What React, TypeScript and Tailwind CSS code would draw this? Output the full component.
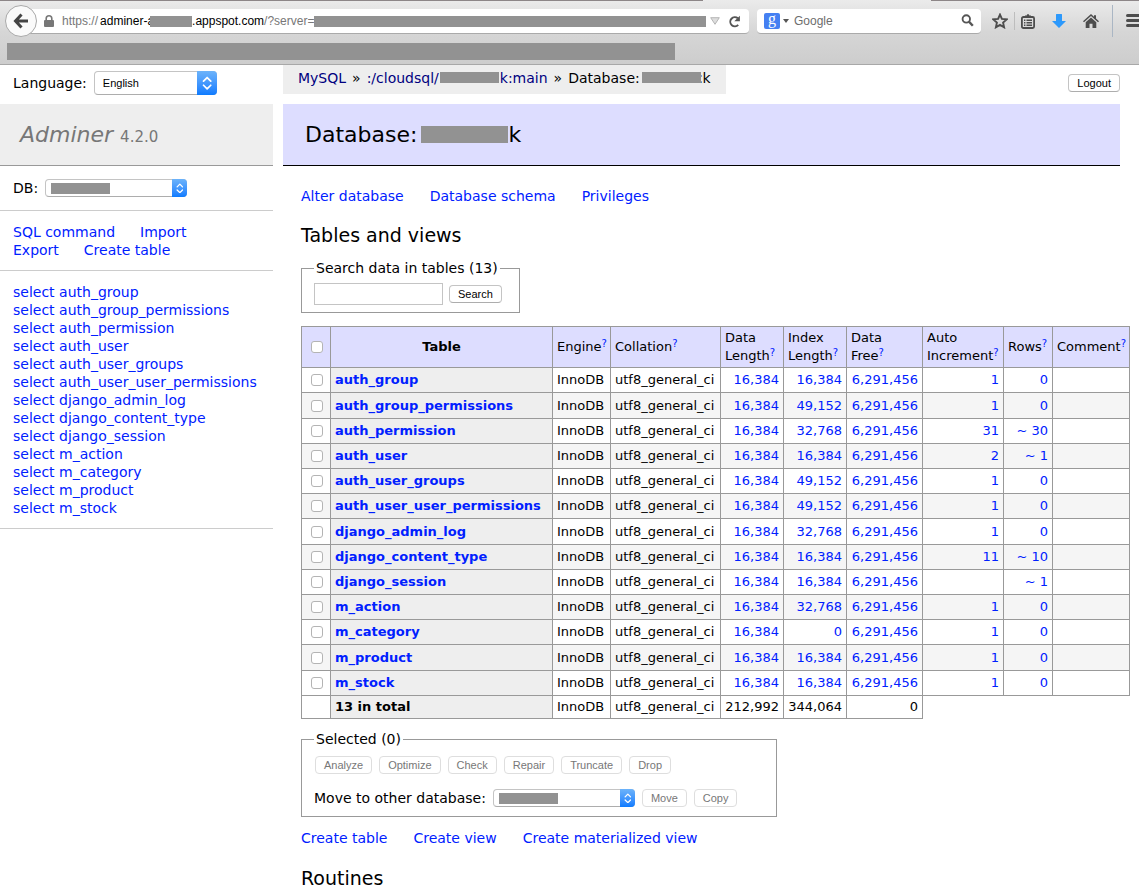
import React, { useState } from 'react';

interface TableRow {
  name: string;
  data: string;
  index: string;
  increment: string;
  rows: string;
}

const TABLES: TableRow[] = [
  { name: 'auth_group', data: '16,384', index: '16,384', increment: '1', rows: '0' },
  { name: 'auth_group_permissions', data: '16,384', index: '49,152', increment: '1', rows: '0' },
  { name: 'auth_permission', data: '16,384', index: '32,768', increment: '31', rows: '~ 30' },
  { name: 'auth_user', data: '16,384', index: '16,384', increment: '2', rows: '~ 1' },
  { name: 'auth_user_groups', data: '16,384', index: '49,152', increment: '1', rows: '0' },
  { name: 'auth_user_user_permissions', data: '16,384', index: '49,152', increment: '1', rows: '0' },
  { name: 'django_admin_log', data: '16,384', index: '32,768', increment: '1', rows: '0' },
  { name: 'django_content_type', data: '16,384', index: '16,384', increment: '11', rows: '~ 10' },
  { name: 'django_session', data: '16,384', index: '16,384', increment: '', rows: '~ 1' },
  { name: 'm_action', data: '16,384', index: '32,768', increment: '1', rows: '0' },
  { name: 'm_category', data: '16,384', index: '0', increment: '1', rows: '0' },
  { name: 'm_product', data: '16,384', index: '16,384', increment: '1', rows: '0' },
  { name: 'm_stock', data: '16,384', index: '16,384', increment: '1', rows: '0' },
];

const ACTIONS = ['Analyze', 'Optimize', 'Check', 'Repair', 'Truncate', 'Drop'];

const cell = 'border border-[#999] px-1';

const Link: React.FC<{ children: React.ReactNode; className?: string }> = ({ children, className = 'text-[#0020ff]' }) => (
  <a href="#" className={className}>{children}</a>
);

const Button: React.FC<{ label: string; disabled?: boolean }> = ({ label, disabled }) => (
  <button
    type="button"
    disabled={disabled}
    className="flex h-[18px] items-center rounded border border-[#c4c4c4] border-b-[#adadad] bg-white px-2 font-[Liberation_Sans,sans-serif] text-[11px] text-black disabled:border-[#dedede] disabled:text-[#777]"
  >
    {label}
  </button>
);

const CheckBox: React.FC<{ label: string; checked: boolean; onChange: () => void }> = ({ label, checked, onChange }) => (
  <input
    type="checkbox"
    aria-label={label}
    checked={checked}
    onChange={onChange}
    className="ml-[5px] block size-3 appearance-none rounded-[3px] border border-[#b4b4b4] bg-white checked:bg-[#2f8cff]"
  />
);

// Blue stepper on the right end of a drop-down
const Stepper: React.FC<{ className: string }> = ({ className }) => (
  <span className={`pointer-events-none absolute right-0 top-0 flex h-full items-center justify-center rounded-r bg-gradient-to-b from-[#6cb3fa] to-[#0a7bff] ${className}`}>
    <svg viewBox="0 0 10 14" className="h-3/5" fill="none" stroke="white" strokeWidth="1.7" strokeLinecap="round" strokeLinejoin="round">
      <path d="M1.5 5 5 1.5 8.5 5M1.5 9 5 12.5 8.5 9" />
    </svg>
  </span>
);

const DatabaseSelect: React.FC<{ id: string }> = ({ id }) => (
  <span className="relative flex">
    <select id={id} className="h-[18px] w-[142px] appearance-none rounded border border-[#c4c4c4] border-b-[#adadad] bg-white">
      <option value="" />
    </select>
    <span className="pointer-events-none absolute left-[6px] top-1 h-[11px] w-[59px] bg-[#929292]" />
    <Stepper className="w-[15px]" />
  </span>
);

const Hint = () => (
  <sup className="relative top-[-4px] align-baseline text-[10px] leading-none"><Link>?</Link></sup>
);

const BrowserBar = () => (
  <header className="flex h-[65px] flex-col overflow-hidden border-b border-[#a8a8a8] bg-gradient-to-b from-[#ebebeb] via-[#d6d6d6] to-[#cdcdcd] font-[Liberation_Sans,sans-serif] text-[12px]">
    <div className="flex h-px shrink-0">
      <div className="w-[703px] bg-[#8d8688]" />
      <div className="w-[228px]" />
      <div className="flex-1 bg-[#8d8688]" />
    </div>
    <div className="flex items-center pl-[5px] pt-1">
      <button type="button" aria-label="Back" className="z-10 flex size-8 shrink-0 items-center justify-center rounded-full border border-[#a9a9a9] bg-[#fafafa]">
        <svg viewBox="0 0 16 16" className="size-4" fill="none" stroke="#444" strokeWidth="3">
          <path d="M8.5 1.5 2.5 8l6 6.5M3 8h12" />
        </svg>
      </button>
      <div className="-ml-2 flex h-[25px] flex-1 items-center rounded-r border-b border-[#aaa] bg-white pl-[15px] pr-2 pt-px">
        <svg viewBox="0 0 10 12" className="mr-2 h-3 w-[10px]">
          <path d="M2.2 6V3.6a2.8 2.8 0 0 1 5.6 0V6" fill="none" stroke="#777" strokeWidth="1.6" />
          <rect y="5" width="10" height="7" rx="1" fill="#777" />
        </svg>
        <div role="textbox" aria-label="Address" className="flex flex-1 items-center whitespace-pre text-[#777]">
          <span className="mr-[2px]">https://</span>
          <span className="text-black">adminer-a</span>
          <span className="-ml-1 h-[11px] w-[42px] bg-[#929292]" />
          <span className="text-black">.appspot.com</span>
          <span>/?server=</span>
          <span className="h-[11px] flex-1 bg-[#929292]" />
        </div>
        <svg viewBox="0 0 10 8" className="ml-1 h-2 w-[10px]">
          <path d="M.7.7h8.600L5 7.300z" fill="#ddd" stroke="#b5b5b5" />
        </svg>
        <button type="button" aria-label="Reload" className="ml-2">
          <svg viewBox="0 0 14 14" className="size-[13px]" fill="none" stroke="#555" strokeWidth="2.1">
            <path d="M10.6 3.6A4.9 4.9 0 1 0 11 10.6" />
            <path d="M12.8.7v6.1H6.8z" fill="#555" stroke="none" />
          </svg>
        </button>
      </div>
      <div className="ml-2 flex h-[25px] w-[224px] shrink-0 items-center rounded border-b border-[#aaa] bg-white px-[7px]">
        <span className="flex size-4 items-center justify-center rounded-[2px] bg-[#4580f2] pb-1 font-[Liberation_Serif,serif] text-[16px] leading-none text-white">g</span>
        <svg viewBox="0 0 6 4" className="ml-[3px] h-1 w-[6px]"><path d="M0 0h6L3 4z" fill="#555" /></svg>
        <input aria-label="Search the web" placeholder="Google" className="ml-[5px] min-w-0 flex-1 pt-px outline-none placeholder:text-[#6d6d6d]" />
        <svg viewBox="0 0 14 14" className="size-[13px]" fill="none" stroke="#555" strokeWidth="2">
          <circle cx="5.7" cy="5.3" r="4" />
          <path d="m8.7 8.4 4 4.3" strokeWidth="2.6" />
        </svg>
      </div>
      <div className="ml-[11px] flex w-[147px] shrink-0 items-center text-[#4d4d4d]">
        <button type="button" aria-label="Bookmark this page" className="shrink-0">
          <svg viewBox="0 0 16 16" className="size-4" fill="none" stroke="currentColor" strokeWidth="1.9">
            <path d="m8 1.6 1.9 4.3 4.8.5-3.6 3.2 1 4.7L8 11.9l-4.1 2.4 1-4.7L1.3 6.4l4.8-.5z" />
          </svg>
        </button>
        <span className="ml-[6px] h-[18px] w-px shrink-0 bg-[#bdbdbd]" />
        <button type="button" aria-label="Bookmarks" className="ml-[6px] shrink-0">
          <svg viewBox="0 0 14 15" className="h-[15px] w-[14px]" fill="none" stroke="currentColor" strokeWidth="1.8">
            <rect x=".9" y="3" width="12.2" height="11" rx="1.5" />
            <path d="M3 6.200h1.400M5.500 6.200H11M3 8.700h1.400M5.500 8.700H11M3 11.200h1.400M5.500 11.200H11" strokeWidth="1.4" />
            <path d="M4 3.500V1.600h1.600L6.200.3h1.600l.6 1.300H10v1.900z" fill="currentColor" stroke="none" />
          </svg>
        </button>
        <button type="button" aria-label="Downloads" className="ml-[17px] shrink-0">
          <svg viewBox="0 0 14 14" className="size-[14px]"><path d="M4 .5Q4 0 4.500 0h5q.5 0 .5.5V7h4l-7 7-7-7h4z" fill="#2d99fb" /></svg>
        </button>
        <button type="button" aria-label="Home" className="ml-[17px] shrink-0">
          <svg viewBox="0 0 16 14" className="h-[14px] w-4" fill="currentColor">
            <path d="M8 0 0 7.200l1 1.100 7-6.300 7 6.300 1-1.100-3-2.700V1.200h-2v1.500z" />
            <path d="m8 3.500-5.300 4.800V14h3.800V9.800h3V14h3.800V8.300z" />
          </svg>
        </button>
        <span className="ml-[13px] h-8 w-px shrink-0 bg-[#aab6c4]" />
        <button type="button" aria-label="Open menu" className="ml-[13px] shrink-0">
          <svg viewBox="0 0 18 14" className="h-[14px] w-[18px]" fill="currentColor">
            <rect width="18" height="3" rx="1.5" /><rect y="5" width="18" height="3" rx="1.5" /><rect y="10" width="18" height="3" rx="1.5" />
          </svg>
        </button>
      </div>
    </div>
    <div className="ml-[7px] mt-[6px] h-[17px] w-[668px] bg-[#929292]" />
  </header>
);

const Sidebar = () => (
  <nav className="w-[273px] shrink-0">
    <div className="flex items-center gap-[7px] px-[13px] pb-[9px] pt-[6px]">
      <label htmlFor="lang">Language:</label>
      <span className="relative flex">
        <select id="lang" className="h-6 w-[123px] appearance-none rounded border border-[#c4c4c4] border-b-[#adadad] bg-white pl-2 font-[Liberation_Sans,sans-serif] text-[11px]">
          <option>English</option>
        </select>
        <Stepper className="w-5" />
      </span>
    </div>
    <h1 className="border-b border-[#999] bg-[#eee] py-[17px] pl-5 text-[22px] leading-[27px] text-[#777]">
      <i>Adminer</i> <span className="text-[15px] leading-none">4.2.0</span>
    </h1>
    <div className="flex items-center gap-[7px] border-b border-[#ccc] px-[13px] py-[13px]">
      <label htmlFor="db">DB:</label>
      <DatabaseSelect id="db" />
    </div>
    <div className="border-b border-[#ccc] px-[13px] pb-[11px] pt-3">
      <p className="flex gap-[25px]"><Link>SQL command</Link><Link>Import</Link></p>
      <p className="flex gap-[25px]"><Link>Export</Link><Link>Create table</Link></p>
    </div>
    <ul className="whitespace-nowrap border-b border-[#ccc] px-[13px] pb-[11px] pt-3">
      {TABLES.map(t => (
        <li key={t.name}><Link>select</Link> <Link>{t.name}</Link></li>
      ))}
    </ul>
  </nav>
);

export default function App() {
  const [query, setQuery] = useState('');
  const [selected, setSelected] = useState<string[]>([]);

  const toggle = (name: string) => {
    setSelected(selected.includes(name) ? selected.filter(n => n !== name) : [...selected, name]);
  };

  const toggleAll = () => {
    setSelected(selected.length === TABLES.length ? [] : TABLES.map(t => t.name));
  };

  const none = selected.length === 0;

  return (
    <div className="overflow-hidden bg-white font-[DejaVu_Sans,sans-serif] text-[14px] leading-[18px] text-black">
      <BrowserBar />
      <div className="flex">
        <Sidebar />
        <main className="ml-[10px] mr-[19px] min-w-0 flex-1">
          {/* Breadcrumb */}
          <div className="flex items-start justify-between">
            <p className="flex h-[29px] items-center gap-[6px] bg-[#eee] px-[15px] pb-1">
              <Link className="text-[#000080]">MySQL</Link>
              <span>»</span>
              <Link className="flex items-center text-[#000080]">
                <span>:/cloudsql/</span>
                <span className="mx-px h-[11px] w-[59px] bg-[#929292]" />
                <span>k:main</span>
              </Link>
              <span>»</span>
              <span className="flex items-center">
                <span>Database:</span>
                <span className="z-10 -mr-[6px] ml-[2px] h-[11px] w-[59px] bg-[#929292]" />
                <span>ck</span>
              </span>
            </p>
            <div className="mt-[9px]"><Button label="Logout" /></div>
          </div>
          <h2 className="mt-[10px] flex items-center border-b border-black bg-[#ddf] px-[22px] py-[17px] text-[22px] leading-[27px]">
            Database: <span className="ml-1 h-[17px] w-[87px] bg-[#929292]" />k
          </h2>

          <div className="ml-[18px]">
            <p className="mt-[21px] flex gap-[26px]">
              <Link>Alter database</Link><Link>Database schema</Link><Link>Privileges</Link>
            </p>
            <h3 className="mt-[18px] text-[19px] leading-[24px]">Tables and views</h3>

            <fieldset className="mt-3 w-fit border border-[#999] pb-[7px] pl-3 pr-[17px]">
              <legend className="px-[2px]">Search data in tables (13)</legend>
              <div className="flex items-center gap-[6px] pt-[6px]">
                <input
                  type="search"
                  aria-label="Search data in tables"
                  value={query}
                  onChange={(e) => setQuery(e.target.value)}
                  className="h-[22px] w-[129px] border border-[#c4c4c4] px-1"
                />
                <Button label="Search" />
              </div>
            </fieldset>

            <table className="mt-[13px] w-[829px] table-fixed border-collapse text-[13px]">
              <colgroup>
                <col className="w-[29px]" />
                <col className="w-[222px]" />
                <col className="w-[58px]" />
                <col className="w-[110px]" />
                <col className="w-[63px]" />
                <col className="w-[63px]" />
                <col className="w-[76px]" />
                <col className="w-[81px]" />
                <col className="w-[49px]" />
                <col className="w-[77px]" />
              </colgroup>
              <thead>
                <tr className="h-[41px] bg-[#ddf] text-left">
                  <td className={cell}><CheckBox label="Select all" checked={selected.length === TABLES.length} onChange={toggleAll} /></td>
                  <th className={`${cell} text-center`}>Table</th>
                  <td className={cell}>Engine<Hint /></td>
                  <td className={cell}>Collation<Hint /></td>
                  <td className={cell}>Data Length<Hint /></td>
                  <td className={cell}>Index Length<Hint /></td>
                  <td className={cell}>Data<br />Free<Hint /></td>
                  <td className={cell}>Auto Increment<Hint /></td>
                  <td className={cell}>Rows<Hint /></td>
                  <td className={cell}>Comment<Hint /></td>
                </tr>
              </thead>
              <tbody className="whitespace-nowrap">
                {TABLES.map(t => (
                  <tr key={t.name} className="h-[25px] even:bg-[#f5f5f5] nth-[5n+2]:h-[26px]">
                    <td className={cell}><CheckBox label={t.name} checked={selected.includes(t.name)} onChange={() => toggle(t.name)} /></td>
                    <th className={`${cell} bg-[#eee] text-left`}><Link>{t.name}</Link></th>
                    <td className={cell}>InnoDB</td>
                    <td className={cell}>utf8_general_ci</td>
                    <td className={`${cell} text-right`}><Link>{t.data}</Link></td>
                    <td className={`${cell} text-right`}><Link>{t.index}</Link></td>
                    <td className={`${cell} text-right`}><Link>6,291,456</Link></td>
                    <td className={`${cell} text-right`}><Link>{t.increment}</Link></td>
                    <td className={`${cell} text-right`}><Link>{t.rows}</Link></td>
                    <td className={cell} />
                  </tr>
                ))}
                <tr className="h-[23px]">
                  <td className={cell} />
                  <th className={`${cell} bg-[#eee] text-left`}>13 in total</th>
                  <td className={cell}>InnoDB</td>
                  <td className={cell}>utf8_general_ci</td>
                  <td className={`${cell} text-right`}>212,992</td>
                  <td className={`${cell} text-right`}>344,064</td>
                  <td className={`${cell} text-right`}>0</td>
                </tr>
              </tbody>
            </table>

            <fieldset className="mt-[11px] w-[476px] border border-[#999] px-3 pb-[9px]">
              <legend className="px-[2px]">Selected ({selected.length})</legend>
              <div className="flex gap-[7px] pl-px pt-2">
                {ACTIONS.map(a => <Button key={a} label={a} disabled={none} />)}
              </div>
              <div className="mt-[15px] flex items-center gap-[7px]">
                <label htmlFor="target">Move to other database:</label>
                <DatabaseSelect id="target" />
                <Button label="Move" disabled={none} />
                <Button label="Copy" disabled={none} />
              </div>
            </fieldset>

            <p className="mt-3 flex gap-[26px]">
              <Link>Create table</Link><Link>Create view</Link><Link>Create materialized view</Link>
            </p>
            <h3 className="mb-1 mt-[19px] text-[19px] leading-[24px]">Routines</h3>
          </div>
        </main>
      </div>
    </div>
  );
}
